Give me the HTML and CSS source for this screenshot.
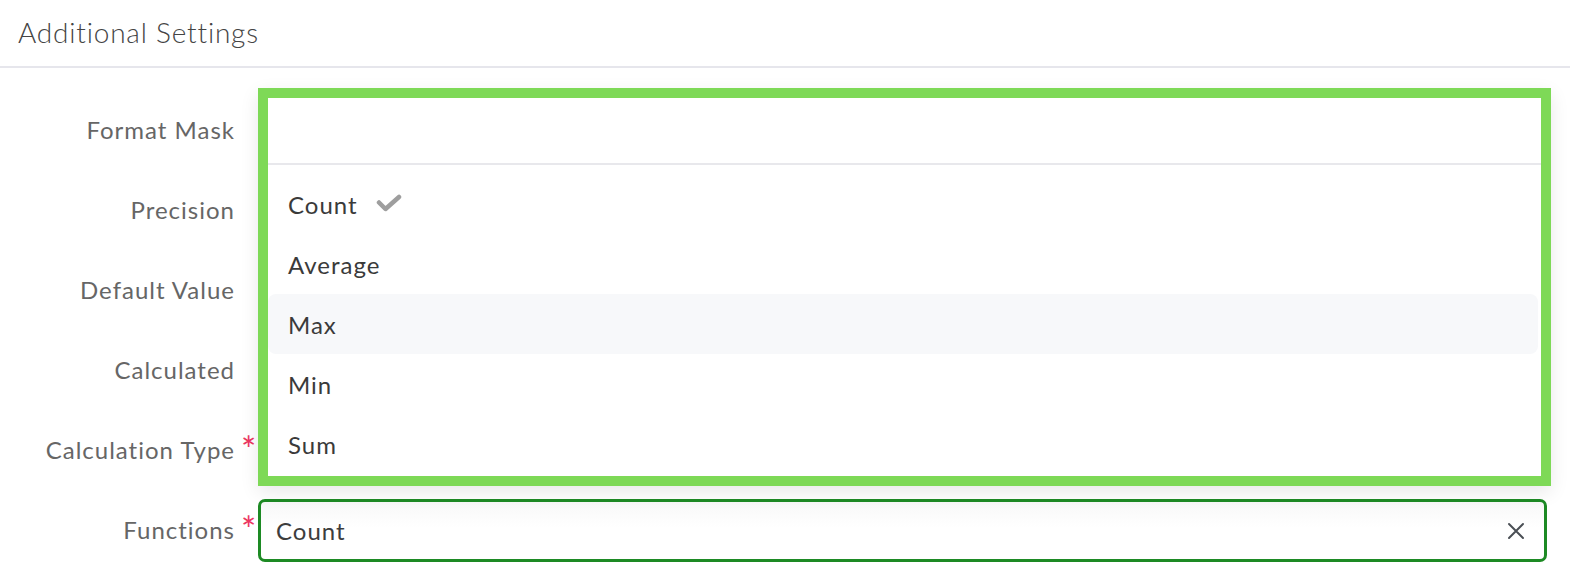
FILE: index.html
```html
<!DOCTYPE html>
<html lang="en">
<head>
<meta charset="utf-8">
<title>Additional Settings</title>
<link rel="stylesheet" href="styles.css">
</head>
<body>
<div class="page">
  <div class="header">Additional Settings</div>
  <div class="form">
    <div class="row"><div class="label">Format Mask</div><div class="req"></div><div class="field"></div></div>
    <div class="row"><div class="label">Precision</div><div class="req"></div><div class="field"></div></div>
    <div class="row"><div class="label">Default Value</div><div class="req"></div><div class="field"></div></div>
    <div class="row"><div class="label">Calculated</div><div class="req"></div><div class="field"></div></div>
    <div class="row"><div class="label">Calculation Type</div><div class="req">*</div><div class="field"></div></div>
    <div class="row"><div class="label">Functions</div><div class="req">*</div>
      <div class="field">
        <div class="select">
          <span class="value">Count</span>
          <svg class="clear" width="18" height="18" viewBox="0 0 18 18"><path d="M2 2 L16 16 M16 2 L2 16" stroke="#4a4f55" stroke-width="2" fill="none" stroke-linecap="round"/></svg>
        </div>
      </div>
    </div>

    <div class="dropdown">
      <div class="search"></div>
      <ul class="options">
        <li class="option">Count <svg class="check" width="26" height="18" viewBox="0 0 26 18"><path d="M3 8.5 L9.5 15 L23 3" stroke="#9e9e9e" stroke-width="4.5" fill="none" stroke-linejoin="round" stroke-linecap="round"/></svg></li>
        <li class="option">Average</li>
        <li class="option hover">Max</li>
        <li class="option">Min</li>
        <li class="option">Sum</li>
      </ul>
    </div>
  </div>
</div>
</body>
</html>
```
FILE: styles.css
```css
html, body {
  margin: 0;
  padding: 0;
  background: #ffffff;
}
body {
  font-family: Lato, "Open Sans", "Liberation Sans", sans-serif;
  color: #333;
}
.page {
  width: 1570px;
  height: 570px;
  overflow: hidden;
}
.header {
  height: 68px;
  box-sizing: border-box;
  padding: 15px 0 0 18px;
  font-size: 28px;
  font-weight: 300;
  letter-spacing: 0.8px;
  color: #444;
  border-bottom: 2px solid #e6e6ec;
}
.form {
  position: relative;
  padding-top: 21px;
}
.row {
  display: grid;
  grid-template-columns: 234px 24px 1fr;
  height: 80px;
  align-items: center;
}
.label {
  text-align: right;
  font-size: 24px;
  letter-spacing: 1px;
  margin-right: -1px;
  color: #666;
}
.req {
  align-self: center;
  padding-left: 7px;
  margin-top: 0;
  font-size: 36px;
  color: #ec3561;
  line-height: 1;
}
.field {
  padding-right: 23px;
}
.select {
  height: 63px;
  margin-top: 3px;
  box-sizing: border-box;
  border: 3px solid #1d8a24;
  border-radius: 7px;
  display: flex;
  align-items: center;
  justify-content: space-between;
  padding: 0 19px 0 15px;
  background: linear-gradient(#f8f8f8, #ffffff 45%);
}
.value {
  font-size: 24px;
  letter-spacing: 1px;
  color: #3d3d3d;
}
.clear {
  display: block;
}
.dropdown {
  position: absolute;
  left: 258px;
  top: 20px;
  width: 1293px;
  height: 398px;
  box-sizing: border-box;
  border: 10px solid #7ed957;
  background: #fff;
  box-shadow: 0 6px 18px rgba(0, 0, 0, 0.09);
}
.search {
  height: 65px;
  border-bottom: 2px solid #e8e8ec;
}
.options {
  list-style: none;
  margin: 0;
  padding: 9px 3px 0 0;
}
.option {
  height: 60px;
  display: flex;
  align-items: center;
  gap: 18px;
  padding-left: 20px;
  font-size: 24px;
  letter-spacing: 1px;
  color: #3a3a3a;
  border-radius: 8px;
}
.option.hover {
  background: #f7f8fa;
}
.check {
  display: block;
  margin-top: -2px;
}
```
